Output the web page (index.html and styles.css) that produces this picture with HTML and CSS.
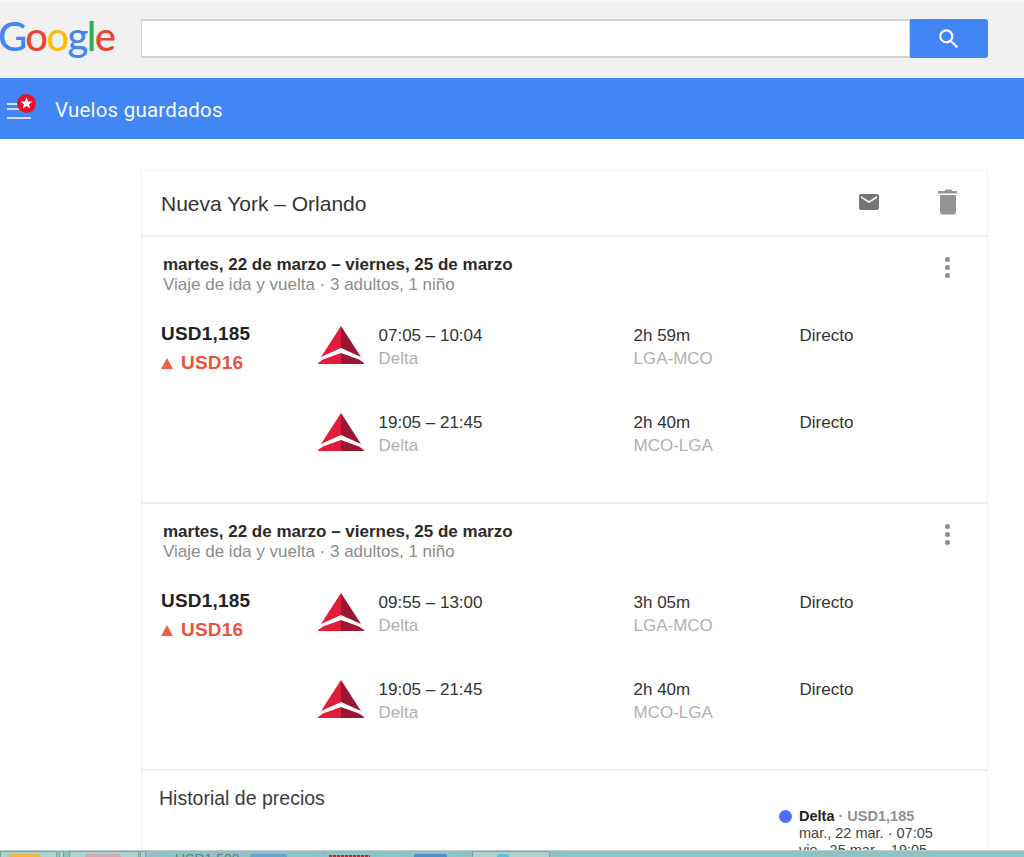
FILE: index.html
```html
<!DOCTYPE html>
<html lang="es">
<head>
<meta charset="utf-8">
<title>Vuelos guardados</title>
<link rel="stylesheet" href="styles.css">
</head>
<body>
<svg class="defs" width="0" height="0" aria-hidden="true">
  <symbol id="delta" viewBox="0 0 46 38">
    <polygon points="23,0 23,22 3,31" fill="#e31c3d"/>
    <polygon points="23,0 23,22 43,31" fill="#9b1631"/>
    <polygon points="23,27 5,33.500 0,37 0,38 23,38" fill="#e31c3d"/>
    <polygon points="23,27 41,33.500 46,37 46,38 23,38" fill="#9b1631"/>
  </symbol>
</svg>

<header class="top">
  <div class="logo" aria-label="Google"><span class="b">G</span><span class="r">o</span><span class="y">o</span><span class="b">g</span><span class="g">l</span><span class="r">e</span></div>
  <div class="search">
    <div class="search-input"></div>
    <button class="search-btn" aria-label="Buscar">
      <svg width="26" height="26" viewBox="0 0 24 24"><path fill="#fff" d="M15.500 14h-.79l-.28-.27A6.470 6.470 0 0 0 16 9.500 6.500 6.500 0 1 0 9.500 16c1.610 0 3.090-.59 4.230-1.570l.27.28v.79l5 4.990L20.490 19l-4.990-5zm-6 0C7.010 14 5 11.990 5 9.500S7.010 5 9.500 5 14 7.010 14 9.500 11.990 14 9.500 14z"/></svg>
    </button>
  </div>
</header>

<div class="bar">
  <div class="bar-icon">
    <svg width="40" height="30" viewBox="0 0 40 30">
      <path d="M7 10h13M7 15h13M7 24h24" stroke="#fff" stroke-width="1.600" fill="none"/>
      <circle cx="26.500" cy="9.500" r="9.500" fill="#e8112d"/>
      <path fill="#fff" d="M26.500 3.500l1.700 4h4.300l-3.400 2.700 1.200 4.300-3.800-2.500-3.800 2.500 1.200-4.300-3.400-2.700h4.300z"/>
    </svg>
  </div>
  <div class="bar-title">Vuelos guardados</div>
</div>

<main class="card">
  <div class="card-head">
    <div class="route">Nueva York – Orlando</div>
    <div class="head-icons">
      <svg class="mail" width="24" height="24" viewBox="0 0 24 24"><path fill="#757575" d="M20 4H4c-1.100 0-2 .9-2 2v12c0 1.100.9 2 2 2h16c1.100 0 2-.9 2-2V6c0-1.100-.9-2-2-2zm0 4l-8 5-8-5V6l8 5 8-5v2z"/></svg>
      <svg width="28" height="30" viewBox="0 0 28 30"><path fill="#959595" d="M6 9h16v17c0 1.300-1 2.400-2.300 2.400H8.300C7 28.400 6 27.300 6 26V9zM4 5h6.500L12 3.500h5L18.500 5H23v2.400H4V5z"/></svg>
    </div>
  </div>

  <section class="trip">
    <div class="trip-head">
      <div>
        <div class="dates">martes, 22 de marzo – viernes, 25 de marzo</div>
        <div class="meta">Viaje de ida y vuelta · 3 adultos, 1 niño</div>
      </div>
      <div class="more"><i></i><i></i><i></i></div>
    </div>
    <div class="trip-body">
      <div class="price-col">
        <div class="price">USD1,185</div>
        <div class="delta-price"><span class="tri"></span>USD16</div>
      </div>
      <div class="legs">
        <div class="leg">
          <svg class="logo-delta"><use href="#delta"/></svg>
          <div class="times"><div class="main">07:05 – 10:04</div><div class="sub">Delta</div></div>
          <div class="dur"><div class="main">2h 59m</div><div class="sub">LGA-MCO</div></div>
          <div class="main stops">Directo</div>
        </div>
        <div class="leg">
          <svg class="logo-delta"><use href="#delta"/></svg>
          <div class="times"><div class="main">19:05 – 21:45</div><div class="sub">Delta</div></div>
          <div class="dur"><div class="main">2h 40m</div><div class="sub">MCO-LGA</div></div>
          <div class="main stops">Directo</div>
        </div>
      </div>
    </div>
  </section>

  <section class="trip">
    <div class="trip-head">
      <div>
        <div class="dates">martes, 22 de marzo – viernes, 25 de marzo</div>
        <div class="meta">Viaje de ida y vuelta · 3 adultos, 1 niño</div>
      </div>
      <div class="more"><i></i><i></i><i></i></div>
    </div>
    <div class="trip-body">
      <div class="price-col">
        <div class="price">USD1,185</div>
        <div class="delta-price"><span class="tri"></span>USD16</div>
      </div>
      <div class="legs">
        <div class="leg">
          <svg class="logo-delta"><use href="#delta"/></svg>
          <div class="times"><div class="main">09:55 – 13:00</div><div class="sub">Delta</div></div>
          <div class="dur"><div class="main">3h 05m</div><div class="sub">LGA-MCO</div></div>
          <div class="main stops">Directo</div>
        </div>
        <div class="leg">
          <svg class="logo-delta"><use href="#delta"/></svg>
          <div class="times"><div class="main">19:05 – 21:45</div><div class="sub">Delta</div></div>
          <div class="dur"><div class="main">2h 40m</div><div class="sub">MCO-LGA</div></div>
          <div class="main stops">Directo</div>
        </div>
      </div>
    </div>
  </section>

  <section class="history">
    <div class="history-title">Historial de precios</div>
    <div class="legend">
      <span class="dot"></span>
      <div>
        <div class="legend-head"><b>Delta</b> <span>· USD1,185</span></div>
        <div>mar., 22 mar. · 07:05</div>
        <div>vie., 25 mar. · 19:05</div>
      </div>
    </div>
  </section>
</main>

<footer class="taskbar">
  <span class="task t1"><i class="chip yellow"></i></span>
  <span class="handle h1"></span>
  <span class="task t2"><i class="chip pink"></i></span>
  <span class="handle h2"></span>
  <span class="ghost">USD1,500</span>
  <i class="chip blue b1"></i>
  <i class="chip dotted"></i>
  <i class="chip blue b2"></i>
  <span class="task t3"><i class="chip cyan"></i></span>
</footer>
</body>
</html>
```
FILE: styles.css
```css
* { box-sizing: border-box; }
html, body { margin: 0; height: 857px; overflow: hidden; }
body { background: #fff; font-family: "Liberation Sans", Arial, sans-serif; color: #212121; position: relative; }
.defs { position: absolute; }

.top { height: 78px; background: #f1f1f1; display: flex; align-items: flex-start; border-top: 2px solid #f6f6f6; }
.logo { width: 141px; padding-top: 9px; font-family: "Lato", sans-serif; font-weight: 500; font-size: 40px; line-height: 50px; letter-spacing: -1.600px; text-indent: -2px; }
.b { color: #4285f4; } .r { color: #ea4335; } .y { color: #fbbc05; } .g { color: #34a853; }
.search { display: flex; width: 847px; margin-top: 17px; height: 39px; }
.search-input { flex: 1; background: #fff; border: 1px solid #d4d4d4; border-width: 2px 1px; }
.search-btn { width: 78px; padding: 0; border: 0; border-radius: 0 3px 3px 0; background: #4285f4; display: flex; align-items: center; justify-content: center; }

.bar { height: 61px; background: #4285f4; display: flex; align-items: center; color: #fff; }
.bar-icon { width: 55px; height: 34px; padding-top: 2px; flex: none; }
.bar-icon svg { display: block; }
.bar-title { font-family: "Roboto", sans-serif; font-size: 20.500px; letter-spacing: .2px; color: #f4f8ff; padding-top: 2px; }

.card { width: 847px; margin: 31px 0 0 141px; border: 1px solid #f0f0f0; border-bottom: 0; height: 690px; }
.card-head { height: 66px; display: flex; align-items: center; justify-content: space-between; padding: 0 25px 0 19px; border-bottom: 2px solid #f1f1f1; }
.route { font-size: 21px; color: #333; padding-top: 2px; }
.head-icons { display: flex; gap: 53px; align-self: flex-start; padding-top: 15px; }
.head-icons svg { display: block; }
.mail { margin-top: 4px; }

.trip { height: 267px; border-bottom: 2px solid #f1f1f1; padding: 18px 37px 0 19px; }
.trip-head { display: flex; justify-content: space-between; padding-left: 2px; }
.dates { font-size: 17px; font-weight: 700; line-height: 20px; color: #2a2a2a; }
.meta { font-size: 17px; line-height: 19px; color: #8c8c8c; }
.more { display: flex; flex-direction: column; gap: 3px; padding-top: 2px; }
.more i { display: block; width: 5px; height: 5px; border-radius: 50%; background: #8f8f8f; }

.trip-body { display: flex; margin-top: 27px; }
.price-col { width: 157px; flex: none; }
.price { font-size: 19px; font-weight: 700; line-height: 26px; color: #222; letter-spacing: .2px; }
.delta-price { font-size: 19px; font-weight: 700; line-height: 26px; color: #e8533f; margin-top: 3px; letter-spacing: .2px; display: flex; align-items: center; }
.tri { width: 0; height: 0; border: 6px solid transparent; border-top: 0; border-bottom: 11px solid #ee6148; margin-right: 8px; }

.legs { flex: 1; display: flex; flex-direction: column; gap: 40px; }
.leg { display: flex; height: 47px; align-items: flex-start; padding-top: 4px; }
.logo-delta { width: 46px; height: 38px; margin-top: 1px; margin-right: 14.500px; flex: none; }
.times { width: 255px; flex: none; }
.dur { width: 166px; flex: none; }
.main { font-size: 17px; line-height: 22px; color: #333; }
.sub { font-size: 17px; line-height: 22px; color: #b0b0b0; margin-top: 1px; }
.stops { white-space: nowrap; }

.history { position: relative; padding: 15px 17px; }
.history-title { font-size: 19.500px; line-height: 24px; color: #3c3c3c; }
.legend { position: absolute; left: 637px; top: 37px; display: flex; gap: 7px; font-size: 14.500px; line-height: 17px; color: #444; }
.legend-head b { color: #222; }
.legend-head span { color: #8f8f8f; font-weight: 700; }
.dot { width: 13px; height: 13px; border-radius: 50%; background: #4d6fff; margin-top: 2px; flex: none; }

.taskbar { position: absolute; left: 0; right: 0; bottom: 0; height: 7px; background: #8fc3c3; border-top: 1px solid #b9cfcf; overflow: hidden; display: flex; align-items: flex-end; }
.task { display: flex; align-items: flex-end; height: 6px; background: #aed2d2; border: 1px solid #7da3a3; border-bottom: 0; flex: none; }
.handle { display: block; height: 6px; background: #aed2d2; border: 1px solid #7da3a3; border-bottom: 0; flex: none; }
.chip { display: block; height: 3px; border-radius: 2px 2px 0 0; flex: none; }
.t1 { width: 57px; padding-left: 8px; }
.yellow { width: 32px; background: #efbb3c; }
.h1 { width: 5px; margin: 0 5px 0 2px; }
.t2 { width: 70px; padding-left: 15px; }
.pink { width: 36px; background: #d1a8b8; }
.h2 { width: 6px; margin-left: 1px; }
.ghost { font-size: 14px; line-height: 14px; height: 5px; color: #5b7f80; width: 75px; margin-left: 29px; white-space: nowrap; }
.blue { background: #4f8fd0; }
.b1 { width: 37px; opacity: .6; }
.dotted { width: 41px; margin-left: 42px; height: 2px; border-radius: 0; background: repeating-linear-gradient(90deg, #d4202f 0 3px, #e88 3px 4px); }
.b2 { width: 33px; margin-left: 44px; }
.t3 { width: 78px; margin-left: 25px; padding-left: 24px; }
.cyan { width: 12px; background: #56c5dc; }
```
